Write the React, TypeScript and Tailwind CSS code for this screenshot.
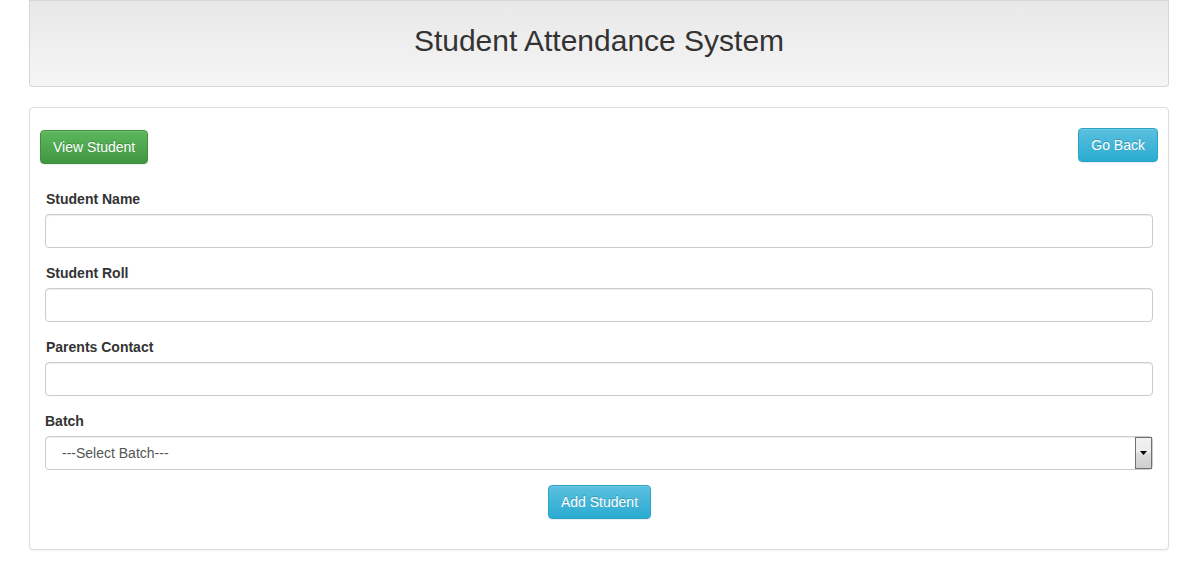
import React from 'react';

const fields = ['Student Name', 'Student Roll', 'Parents Contact'];

const App: React.FC = () => {
  return (
    <div className="min-h-[583px] bg-white font-['Liberation_Sans',Arial,sans-serif] text-[14px] leading-[20px] text-[#333]">
      <div className="mx-auto w-[1140px]">
        {/* Header */}
        <div className="flex h-[87px] items-center justify-center rounded-b-[4px] border border-t-0 border-[#d6d6d6] bg-[linear-gradient(to_bottom,#e8e8e8,#f5f5f5)] shadow-[inset_0_1px_0_rgba(0,0,0,0.08)]">
          <h2 className="pb-[5px] text-[30px] leading-[33px] font-normal text-[#333]">Student Attendance System</h2>
        </div>

        {/* Panel */}
        <div className="mt-[20px] rounded-[4px] border border-[#ddd] bg-white shadow-[0_1px_2px_rgba(0,0,0,0.05)]">
          <div className="flex items-start justify-between px-[10px]">
            <button className="mt-[22px] h-[34px] rounded-[4px] border border-[#3e8f3e] bg-[linear-gradient(to_bottom,#5cb85c,#419641)] px-[12px] text-[14px] text-white shadow-[inset_0_1px_0_rgba(255,255,255,0.15),0_1px_1px_rgba(0,0,0,0.075)] [text-shadow:0_-1px_0_rgba(0,0,0,0.2)]">
              View Student
            </button>
            <button className="mt-[20px] h-[34px] rounded-[4px] border border-[#28a4c9] bg-[linear-gradient(to_bottom,#5bc0de,#2aabd2)] px-[12px] text-[14px] text-white shadow-[inset_0_1px_0_rgba(255,255,255,0.15),0_1px_1px_rgba(0,0,0,0.075)] [text-shadow:0_-1px_0_rgba(0,0,0,0.2)]">
              Go Back
            </button>
          </div>

          <form className="px-[15px] pt-[25px] pb-[30px]" onSubmit={(e) => e.preventDefault()}>
            {fields.map((f) => (
              <div key={f} className="mb-[15px]">
                <label className="mb-[5px] block pl-[1px] font-bold">{f}</label>
                <input
                  type="text"
                  className="block h-[34px] w-full rounded-[4px] border border-[#ccc] bg-white px-[12px] text-[#555] shadow-[inset_0_1px_1px_rgba(0,0,0,0.075)] outline-none"
                />
              </div>
            ))}
            <div className="mb-[15px]">
              <label className="mb-[5px] block font-bold">Batch</label>
              <div className="relative">
                <select className="block h-[34px] w-full appearance-none rounded-[4px] border border-[#ccc] bg-white pl-[16px] text-[14px] text-[#555] shadow-[inset_0_1px_1px_rgba(0,0,0,0.075)] outline-none">
                  <option>---Select Batch---</option>
                </select>
                <div className="pointer-events-none absolute top-[1px] right-[1px] bottom-[1px] flex w-[17px] items-center justify-center border border-[#707070] bg-[linear-gradient(to_bottom,#f2f2f2_0%,#ebebeb_50%,#dddddd_51%,#cfcfcf_100%)]">
                  <svg width="7" height="4" viewBox="0 0 7 4">
                    <path d="M0 0h7L3.5 4z" fill="#000" />
                  </svg>
                </div>
              </div>
            </div>
            <div className="flex justify-center">
              <button className="ml-[1px] h-[34px] rounded-[4px] border border-[#28a4c9] bg-[linear-gradient(to_bottom,#5bc0de,#2aabd2)] px-[12px] text-[14px] text-white shadow-[inset_0_1px_0_rgba(255,255,255,0.15),0_1px_1px_rgba(0,0,0,0.075)] [text-shadow:0_-1px_0_rgba(0,0,0,0.2)]">
                Add Student
              </button>
            </div>
          </form>
        </div>
      </div>
    </div>
  );
};

export default App;
